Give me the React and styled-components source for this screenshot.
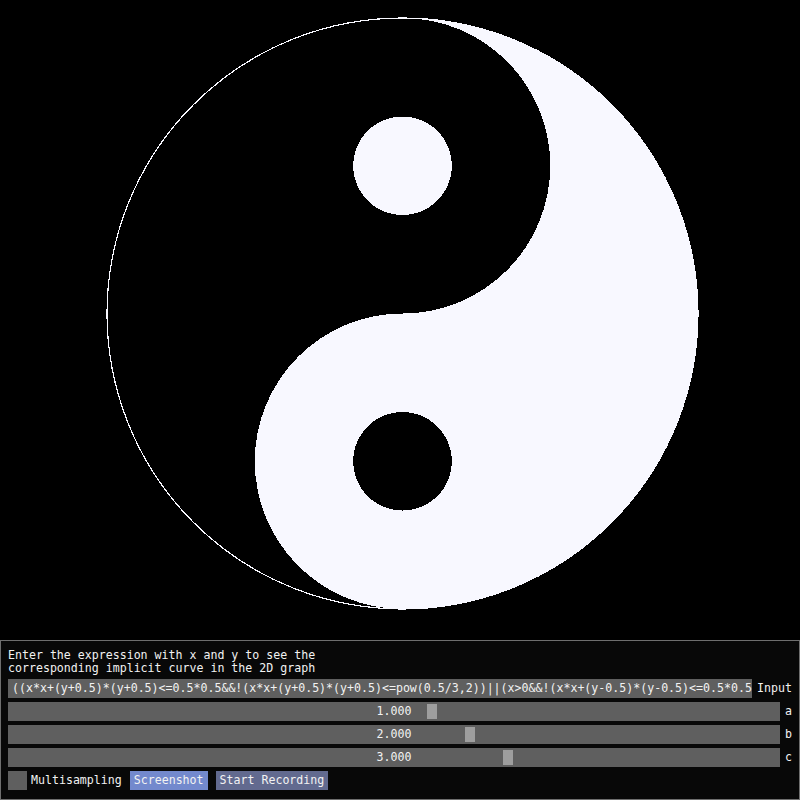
import React from 'react';
import styled, { createGlobalStyle } from 'styled-components';

const CX = 402.5;
const CY = 313.5;
const R = 295.5;
const EXPRESSION =
    '((x*x+(y+0.5)*(y+0.5)<=0.5*0.5&&!(x*x+(y+0.5)*(y+0.5)<=pow(0.5/3,2))||(x>0&&!(x*x+(y-0.5)*(y-0.5)<=0.5*0.5&&!(x*x+(y-0.5)*(y-0.5)<=pow(0.5/3,2))))||(x*x+(y-0.5)*(y-0.5)<=pow(0.5/3,2))';

const params = [
    { name: 'a', value: 1 },
    { name: 'b', value: 2 },
    { name: 'c', value: 3 },
];

export default function App() {
    const yang =
        `M ${CX} ${CY - R} A ${R} ${R} 0 0 1 ${CX} ${CY + R} ` +
        `A ${R / 2} ${R / 2} 0 0 1 ${CX} ${CY} ` +
        `A ${R / 2} ${R / 2} 0 0 0 ${CX} ${CY - R} Z`;

    return (
        <Screen>
            <GlobalStyle />
            <Graph viewBox="0 0 800 640" shapeRendering="crispEdges">
                <circle cx={CX} cy={CY} r={R} fill="none" stroke="#f8f8ff" strokeWidth="1.2" />
                <path d={yang} fill="#f8f8ff" />
                <circle cx={CX} cy={CY - R / 2} r={R / 6} fill="#f8f8ff" />
                <circle cx={CX} cy={CY + R / 2} r={R / 6} fill="#000" />
            </Graph>
            <Panel>
                <Hint>
                    Enter the expression with x and y to see the
                    <br />
                    corresponding implicit curve in the 2D graph
                </Hint>
                <Row>
                    <ExprInput defaultValue={EXPRESSION} spellCheck={false} />
                    <Label>Input</Label>
                </Row>
                {params.map((p) => (
                    <Row key={p.name}>
                        <Slider>
                            <Grab style={{ left: `${2 + ((p.value + 10) / 20) * 759}px` }} />
                            <SliderValue>{p.value.toFixed(3)}</SliderValue>
                        </Slider>
                        <Label>{p.name}</Label>
                    </Row>
                ))}
                <Toolbar>
                    <CheckBox />
                    <CheckText>Multisampling</CheckText>
                    <Button $color="#7389cd">Screenshot</Button>
                    <Button $color="#626a8f">Start Recording</Button>
                </Toolbar>
            </Panel>
        </Screen>
    );
}

const GlobalStyle = createGlobalStyle`
    html, body {
        margin: 0;
        padding: 0;
        background: #000;
        overflow: hidden;
    }
    body {
        font-family: "DejaVu Sans Mono", "Liberation Mono", monospace;
        font-size: 11.6px;
        color: #f2f2f2;
    }
`;

const Screen = styled.div`
    width: 800px;
    height: 800px;
    display: flex;
    flex-direction: column;
    background: #000;
`;

const Graph = styled.svg`
    display: block;
    width: 800px;
    height: 640px;
    flex: none;
`;

const Panel = styled.div`
    flex: 1;
    box-sizing: border-box;
    border: 1px solid #6e6e6e;
    background: #080808;
    padding: 8px 7px 0 7px;
    display: flex;
    flex-direction: column;
    gap: 4px;
`;

const Hint = styled.div`
    line-height: 13px;
    white-space: nowrap;
`;

const Row = styled.div`
    display: flex;
    align-items: center;
    gap: 5px;
    height: 19px;
`;

const ExprInput = styled.input`
    width: 745px;
    height: 19px;
    box-sizing: border-box;
    border: none;
    outline: none;
    margin: 0;
    padding: 0 0 0 4px;
    background: #5f5f5f;
    color: #f2f2f2;
    font: inherit;
    line-height: 19px;
`;

const Label = styled.span`
    line-height: 19px;
    white-space: nowrap;
`;

const Slider = styled.div`
    position: relative;
    width: 773px;
    height: 19px;
    background: #5f5f5f;
    display: flex;
    align-items: center;
    justify-content: center;
`;

const Grab = styled.div`
    position: absolute;
    top: 2px;
    width: 10px;
    height: 15px;
    background: #9e9e9e;
`;

const SliderValue = styled.span`
    position: relative;
    line-height: 19px;
`;

const Toolbar = styled.div`
    display: flex;
    align-items: center;
    height: 19px;
`;

const CheckBox = styled.div`
    width: 19px;
    height: 19px;
    background: #5f5f5f;
    margin-right: 4px;
`;

const CheckText = styled.span`
    line-height: 19px;
    margin-right: 8px;
`;

const Button = styled.div`
    height: 19px;
    padding: 0 4px;
    line-height: 19px;
    background: ${(p) => p.$color};
    margin-right: 8px;
    white-space: nowrap;
`;
